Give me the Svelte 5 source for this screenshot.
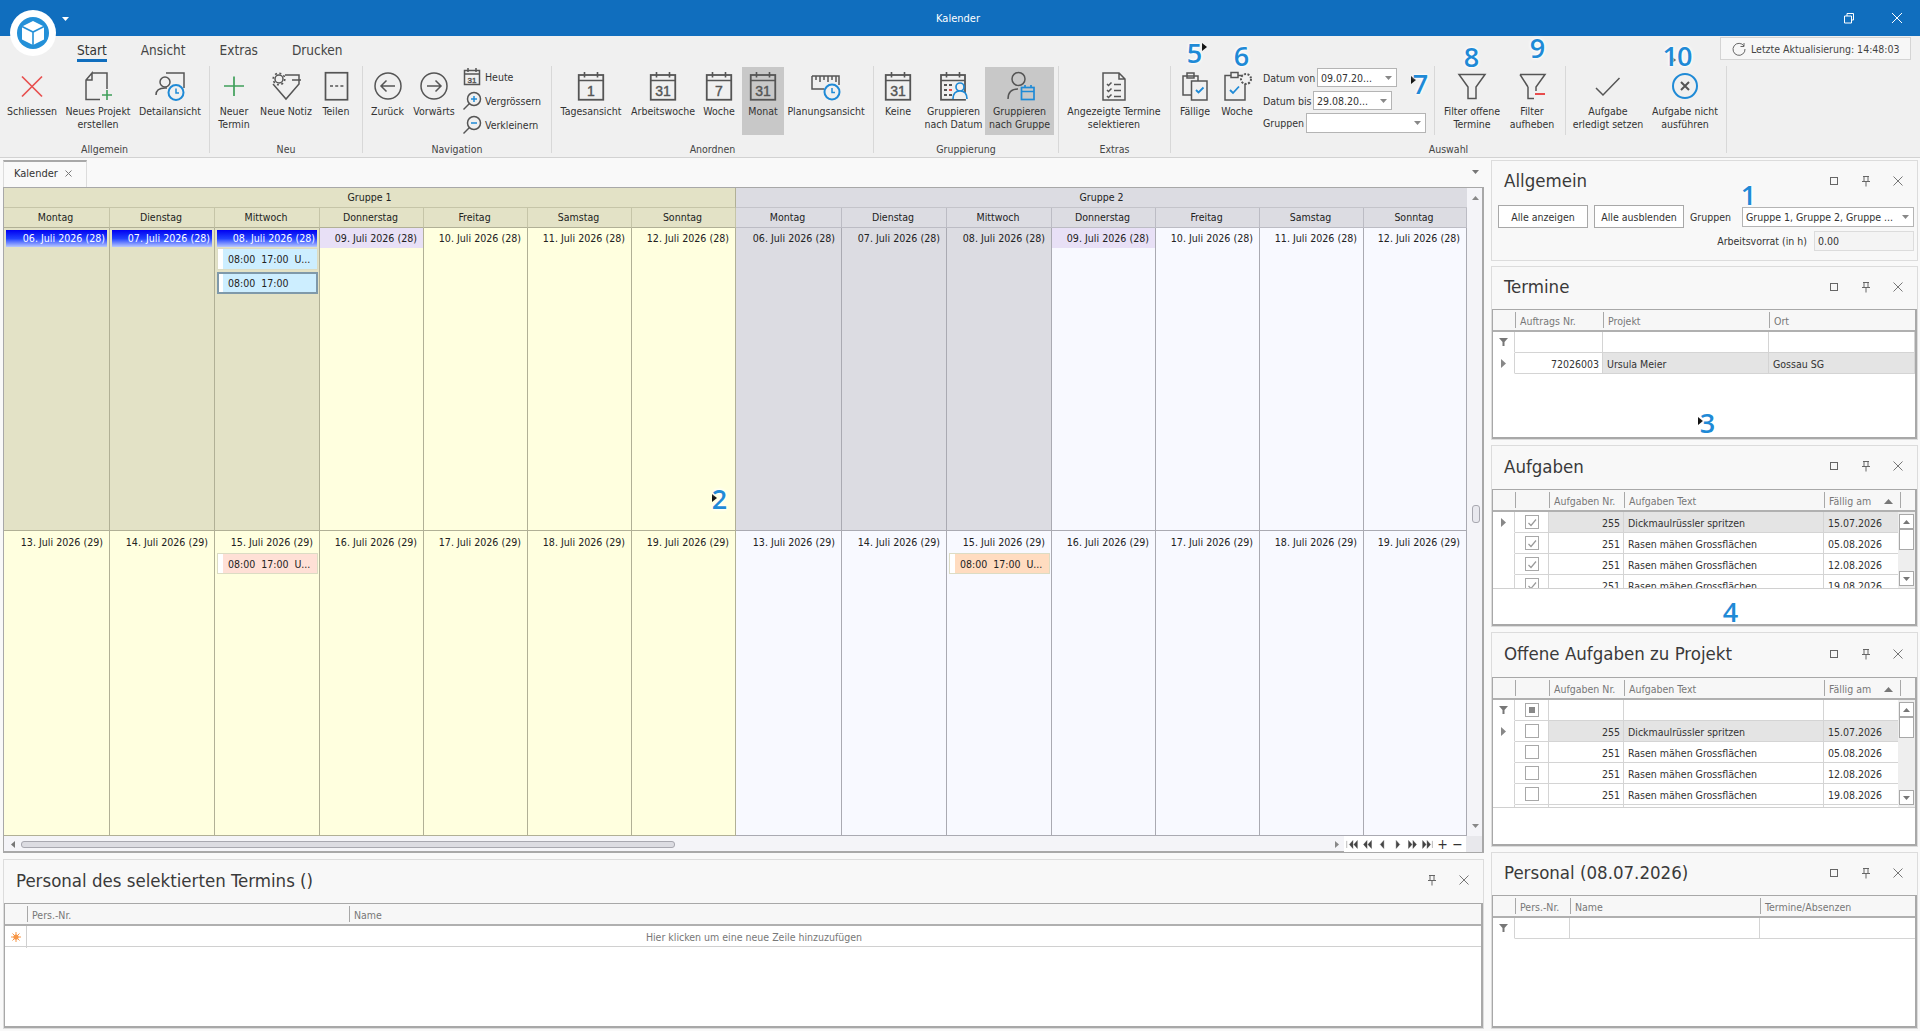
<script>
	const ico = (body, size = 32) =>
		`<svg width="${size}" height="${size}" viewBox="0 0 ${size} ${size}" fill="none" stroke="#555" stroke-width="1.5">${body}</svg>`;
	const BLUE = '#1f8ad6';
	const txt = (t, x, y, fs = 14) =>
		`<text x="${x}" y="${y}" text-anchor="middle" font-size="${fs}" fill="#555" stroke="#555" stroke-width=".4" font-family="Liberation Sans, sans-serif">${t}</text>`;
	const calBody = (t) =>
		`<rect x="3.75" y="4" width="24.5" height="24.75" stroke-width="1.8"/><path d="M3.75 9.5h24.5M9.5 1v5.5M22.5 1v5.5" stroke-width="1.6"/>${t ? txt(t, 16, 25) : ''}`;
	const clock = (x, y, r = 7.5) =>
		`<circle cx="${x}" cy="${y}" r="${r}" fill="#f0f0f0" stroke="${BLUE}" stroke-width="2"/><path d="M${x} ${y - 4}v4.5h3" stroke="${BLUE}" stroke-width="1.5"/>`;
	const icons = {
		close: ico('<path d="M6 5.5l20 20M26 5.5l-20 20" stroke="#e8504f" stroke-width="1.7"/>'),
		newproj: ico(`<path d="M10 2h15v16M18 28.5H4V9l6-7v7H4"/><path d="M25 19v10M20 24h10" stroke="#3f9f5a" stroke-width="1.6"/>`),
		detail: ico(`<path d="M12 2h18v15"/><circle cx="11" cy="11" r="5"/><path d="M2 24c0-5 3-7 9-7h2"/>${clock(22, 21.5)}`),
		plus: ico('<path d="M16 5.5v19.5M6 15h20" stroke="#3f9f5a" stroke-width="1.7"/>'),
		note: ico(`<path d="M15 4h14v9L16 28 3 13"/><path d="M22 9h9"/><circle cx="9" cy="8" r="4"/><circle cx="9" cy="8" r="5.8" stroke-dasharray="2 2.5" stroke-width="1.6"/>`),
		split: ico('<rect x="5.5" y="1.75" width="22" height="27" stroke-width="1.7"/><path d="M10 15h14" stroke-dasharray="3 2.2"/>'),
		back: ico('<circle cx="16" cy="15" r="13"/><path d="M9 15h14M14.5 9.5L9 15l5.5 5.5"/>'),
		forward: ico('<circle cx="16" cy="15" r="13"/><path d="M9 15h14M17.5 9.5L23 15l-5.5 5.5"/>'),
		cal1: ico(calBody('1')),
		cal31: ico(calBody('31')),
		cal7: ico(calBody('7')),
		plan: ico(`<path d="M2 5h27v9M2 5v13h12M6 5v4M10 5v6M14 5v4M18 5v6M22 5v4M26 5v6"/>${clock(22, 21)}`),
		groupdate: ico(`<rect x="3" y="4" width="24" height="24.75" stroke-width="1.8"/><path d="M3 9.5h24M8.5 1v5.5M21.5 1v5.5" stroke-width="1.6"/><path d="M6 14h3M11 14h3M6 19h3M6 24h3M11 24h3" stroke-width="2"/><path d="M11 19h3" stroke="#e8504f" stroke-width="2"/><circle cx="22" cy="16" r="4" fill="#f0f0f0" stroke="${BLUE}" stroke-width="1.7"/><path d="M15 28c0-6 3-8 7-8s7 2 7 8" fill="#f0f0f0" stroke="${BLUE}" stroke-width="1.7"/>`),
		groupgroup: ico(`<circle cx="14.5" cy="8" r="6.5"/><path d="M4 28c0-7 4-10 10-10"/><rect x="17.5" y="16.5" width="12.5" height="12" stroke="${BLUE}" stroke-width="1.7"/><path d="M17.5 20.5h12.5M21 14v3M27 14v3" stroke="${BLUE}" stroke-width="1.7"/>`),
		list: ico('<path d="M5 2h16l6 6v21H5zM21 2v6h6"/><path d="M9 13l1.5 1.5 3-3M9 19l1.5 1.5 3-3M9 25l1.5 1.5 3-3"/><path d="M16 13.5h7M16 19.5h7M16 25.5h7" stroke-width="1.7"/>'),
		due: ico(`<path d="M12 24H4V5h15v5"/><rect x="8" y="2" width="7" height="5"/><rect x="12.5" y="10" width="15.5" height="19" fill="#f0f0f0"/><path d="M17 19l2.5 2.5 5-5" stroke="${BLUE}" stroke-width="1.8"/>`),
		week: ico(`<rect x="4" y="4.5" width="20" height="24.5"/><rect x="10" y="1.5" width="7" height="5" fill="#f0f0f0"/><circle cx="25" cy="8" r="5" fill="#f0f0f0" stroke-dasharray="2 1.5" stroke-width="2"/><path d="M9 19l3 3 6-6.5" stroke="${BLUE}" stroke-width="1.8"/>`),
		filter: ico('<path d="M3 3.5h26L20 16v11.5h-8V16z"/>'),
		filteroff: ico('<path d="M4 3.5h25l-9 12.5v4M12 16L4 3.5M12 16v11.5h6"/><path d="M19 23h10" stroke="#e84c4c" stroke-width="2"/>'),
		check: ico('<path d="M4 17l7 7L27.5 7"/>'),
		cancel: ico(`<circle cx="16" cy="15" r="12" stroke="${BLUE}" stroke-width="2"/><path d="M12 11l8 8M20 11l-8 8" stroke-width="2"/>`),
		today: ico('<rect x="2.5" y="3.5" width="15" height="14"/><path d="M2.5 7h15M6 1v4M14 1v4"/>' + txt('31', 10, 15.5, 8), 20),
		zoomin: ico(`<circle cx="12" cy="8" r="6.5"/><path d="M7.5 12.5L1.5 18.5"/><path d="M12 5v6M9 8h6" stroke="${BLUE}"/>`, 20),
		zoomout: ico(`<circle cx="12" cy="8" r="6.5"/><path d="M7.5 12.5L1.5 18.5"/><path d="M9 8h6" stroke="${BLUE}"/>`, 20)
	};

	const groups = [
		{ name: 'Allgemein', w: 210, items: [
			{ icon: 'close', w: 64, label: 'Schliessen' },
			{ icon: 'newproj', w: 68, label: 'Neues Projekt\nerstellen' },
			{ icon: 'detail', w: 76, label: 'Detailansicht' }
		] },
		{ name: 'Neu', w: 153, items: [
			{ icon: 'plus', w: 48, label: 'Neuer\nTermin' },
			{ icon: 'note', w: 56, label: 'Neue Notiz' },
			{ icon: 'split', w: 44, label: 'Teilen' }
		] },
		{ name: 'Navigation', w: 189, items: [
			{ icon: 'back', w: 49, label: 'Zurück' },
			{ icon: 'forward', w: 44, label: 'Vorwärts' },
			{ kind: 'nav' }
		] },
		{ name: 'Anordnen', w: 322, items: [
			{ icon: 'cal1', w: 78, label: 'Tagesansicht' },
			{ icon: 'cal31', w: 66, label: 'Arbeitswoche' },
			{ icon: 'cal7', w: 46, label: 'Woche' },
			{ icon: 'cal31', w: 42, label: 'Monat', on: true },
			{ icon: 'plan', w: 84, label: 'Planungsansicht' }
		] },
		{ name: 'Gruppierung', w: 185, items: [
			{ icon: 'cal31', w: 48, label: 'Keine' },
			{ icon: 'groupdate', w: 63, label: 'Gruppieren\nnach Datum' },
			{ icon: 'groupgroup', w: 69, label: 'Gruppieren\nnach Gruppe', on: true }
		] },
		{ name: 'Extras', w: 112, items: [
			{ icon: 'list', w: 110, label: 'Angezeigte Termine\nselektieren' }
		] },
		{ name: 'Auswahl', w: 556, items: [
			{ icon: 'due', w: 48, label: 'Fällige' },
			{ icon: 'week', w: 36, label: 'Woche' },
			{ kind: 'form' },
			{ kind: 'sep' },
			{ icon: 'filter', w: 74, label: 'Filter offene\nTermine' },
			{ icon: 'filteroff', w: 46, label: 'Filter\naufheben' },
			{ kind: 'space' },
			{ kind: 'sep' },
			{ icon: 'check', w: 84, label: 'Aufgabe\nerledigt setzen' },
			{ icon: 'cancel', w: 70, label: 'Aufgabe nicht\nausführen' }
		] }
	];

	const formRows = [
		{ label: 'Datum von', lw: 54, w: 80, value: '09.07.20...' },
		{ label: 'Datum bis', lw: 50, w: 79, value: '29.08.20...' },
		{ label: 'Gruppen', lw: 43, w: 120, value: '', tall: true }
	];

	const colW = [106, 105, 105, 104, 104, 104, 104, 106, 105, 105, 104, 104, 104, 103];
	const dayNames = ['Montag', 'Dienstag', 'Mittwoch', 'Donnerstag', 'Freitag', 'Samstag', 'Sonntag'];
	const gridCols = colW.map((w) => w + 'px').join(' ');
	const allDays = [...dayNames, ...dayNames];

	const idx = [0, 1, 2, 3, 4, 5, 6, 7, 8, 9, 10, 11, 12, 13];
	const g1 = (i) => i < 7;
	const week1 = idx.map((i) => ({
		g2: !g1(i),
		sel: i % 7 < 3,
		today: i % 7 === 3,
		active: g1(i) && i < 3,
		date: `${String(6 + (i % 7)).padStart(2, '0')}. Juli 2026 (28)`,
		events: i === 2 ? [
			{ text: '08:00  17:00  U...', kind: 'blue' },
			{ text: '08:00  17:00', kind: 'blue picked' }
		] : []
	}));
	const week2 = idx.map((i) => ({
		g2: !g1(i),
		date: `${13 + (i % 7)}. Juli 2026 (29)`,
		events: i === 2 ? [{ text: '08:00  17:00  U...', kind: 'rose' }] : i === 9 ? [{ text: '08:00  17:00  U...', kind: 'peach' }] : []
	}));

	const navIcons = [
		'M1 5.5v8M8 5l-4 4.5 4 4.5zM13 5l-4 4.5 4 4.5z',
		'M7 5l-4 4.5 4 4.5zM12 5l-4 4.5 4 4.5z',
		'M9 5l-4 4.5 4 4.5z',
		'M6 5l4 4.5-4 4.5z',
		'M3 5l4 4.5-4 4.5zM8 5l4 4.5-4 4.5z',
		'M2 5l4 4.5-4 4.5zM7 5l4 4.5-4 4.5zM13 5.5v8'
	];

	const taskCols = [22, 34, 75, 200, 76, 0];
	const taskHead = ['', '', 'Aufgaben Nr.', 'Aufgaben Text', 'Fällig am', ''];
	const taskRows = [
		['255', 'Dickmaulrüssler spritzen', '15.07.2026'],
		['251', 'Rasen mähen Grossflächen', '05.08.2026'],
		['251', 'Rasen mähen Grossflächen', '12.08.2026'],
		['251', 'Rasen mähen Grossflächen', '19.08.2026']
	];
	const panels = [
		{ title: 'Termine', h: 174, head: 42, max: true, grid: {
			cols: [22, 88, 166, 146], labels: ['', 'Auftrags Nr.', 'Projekt', 'Ort'], filter: true, bodyH: 65,
			rows: [['72026003', 'Ursula Meier', 'Gossau SG']], align: ['r', 'l', 'l']
		} },
		{ title: 'Aufgaben', h: 182, head: 43, max: true, grid: {
			cols: taskCols, labels: taskHead, checks: 'on', sort: true, scroll: true, bodyH: 77,
			rows: taskRows, align: ['r', 'l', 'l']
		} },
		{ title: 'Offene Aufgaben zu Projekt', h: 215, head: 44, max: true, grid: {
			cols: taskCols, labels: taskHead, checks: 'off', filter: true, sort: true, scroll: true, bodyH: 108,
			rows: [...taskRows, ['', '', '']], align: ['r', 'l', 'l']
		} },
		{ title: 'Personal (08.07.2026)', h: 177, head: 42, max: true, grid: {
			cols: [22, 55, 190, 156], labels: ['', 'Pers.-Nr.', 'Name', 'Termine/Absenzen'], filter: true, bodyH: 110,
			rows: [], align: []
		} }
	];
	const template = (cols) => cols.map((w) => (w ? w + 'px' : '17px')).join(' ');

	const marks = [
		{ n: '1', x: 1748, y: 194 }, { n: '2', x: 719, y: 498 }, { n: '3', x: 1707, y: 422 },
		{ n: '4', x: 1730, y: 611 }, { n: '5', x: 1194, y: 52 }, { n: '6', x: 1241, y: 55 },
		{ n: '7', x: 1420, y: 83 }, { n: '8', x: 1471, y: 56 }, { n: '9', x: 1537, y: 47 },
		{ n: '10', x: 1677, y: 55 }
	];
	// little black leftovers next to some of the numbers
	const specks = [
		{ x: 1202, y: 43 }, { x: 1411, y: 76 }, { x: 1698, y: 417 }, { x: 1671, y: 56 }, { x: 712, y: 494 }
	];
</script>

{#snippet panelTools(max)}
	<div class="tools">
		{#if max}
			<svg width="10" height="10" viewBox="0 0 10 10"><rect x="1.5" y="1.5" width="7" height="7" fill="none" stroke="#666" /></svg>
		{/if}
		<svg width="10" height="12" viewBox="0 0 10 12"><path d="M2 1.5h6M3 1.5v4.5M7 1.5v4.5M1 6.5h8M5 6.5v5" fill="none" stroke="#666" /></svg>
		<svg width="10" height="10" viewBox="0 0 10 10"><path d="M.5.5l9 9M9.5.5l-9 9" fill="none" stroke="#777" /></svg>
	</div>
{/snippet}

{#snippet funnel()}
	<svg width="9" height="8" viewBox="0 0 9 8"><path d="M0 0h9L5.5 4v4h-2V4z" fill="#777" /></svg>
{/snippet}

{#snippet dataGrid(g)}
	<div class="grid">
		<div class="thead" style="grid-template-columns:{template(g.cols)}">
			{#each g.labels as label, i}
				<div class="th" class:plain={i === 0 || (g.checks && i === 1)}>
					{label}
					{#if g.sort && label === 'Fällig am'}
						<svg class="sort" width="9" height="5" viewBox="0 0 9 5"><path d="M4.5 0L9 5H0z" fill="#777" /></svg>
					{/if}
				</div>
			{/each}
		</div>
		<div class="tbody" class:clipped={g.scroll} style="height:{g.bodyH}px">
			<div class="trows">
				{#if g.filter}
					<div class="tr" style="grid-template-columns:{template(g.cols.filter((w) => w))}">
						<div class="td ind">{@render funnel()}</div>
						{#if g.checks}
							<div class="td mid"><span class="box"><i></i></span></div>
						{/if}
						{#each g.cols.slice(g.checks ? 2 : 1).filter((w) => w) as _}
							<div class="td"></div>
						{/each}
					</div>
				{/if}
				{#each g.rows as row, r}
					<div class="tr" style="grid-template-columns:{template(g.cols.filter((w) => w))}">
						<div class="td ind">
							{#if r === 0}<svg width="5" height="9" viewBox="0 0 5 9"><path d="M0 0l5 4.5L0 9z" fill="#888" /></svg>{/if}
						</div>
						{#if g.checks}
							<div class="td mid">
								<span class="box">
									{#if g.checks === 'on'}
										<svg width="10" height="9" viewBox="0 0 10 9"><path d="M1.5 5l2.5 2.5 5-6" fill="none" stroke="#999" stroke-width="1.2" /></svg>
									{/if}
								</span>
							</div>
						{/if}
						{#each row as value, c}
							<div class="td" class:cur={r === 0 && (g.checks || c > 0)} class:num={g.align[c] === 'r'}>{value}</div>
						{/each}
					</div>
				{/each}
			</div>
			{#if g.scroll}
				<div class="vbar">
					<span class="vbtn"><svg width="7" height="4" viewBox="0 0 7 4"><path d="M3.5 0L7 4H0z" fill="#777" /></svg></span>
					<span class="vthumb"></span>
					<span class="vfill"></span>
					<span class="vbtn"><svg width="7" height="4" viewBox="0 0 7 4"><path d="M3.5 4L7 0H0z" fill="#777" /></svg></span>
				</div>
			{/if}
		</div>
	</div>
{/snippet}

<div class="app">
	<header class="titlebar">
		<span></span>
		<span class="title">Kalender</span>
		<div class="winbtns">
			<svg width="12" height="12" viewBox="0 0 12 12"><path d="M1.5 4h7v7h-7zM4 4V1.5h6.5V8H8.5" fill="none" stroke="#fff" /></svg>
			<svg width="12" height="12" viewBox="0 0 12 12"><path d="M1 1l10 10M11 1L1 11" fill="none" stroke="#fff" /></svg>
		</div>
	</header>

	<div class="logo">
		<svg width="46" height="46" viewBox="0 0 46 46">
			<circle cx="23" cy="23" r="23" fill="#fff" />
			<circle cx="23" cy="23" r="16" fill="#2490d8" />
			<path d="M23 11l11 5.5v13L23 35l-11-5.5v-13z" fill="#fff" />
			<path d="M12 16.5L23 22l11-5.5M23 22v13" fill="none" stroke="#2490d8" stroke-width="1.6" />
		</svg>
		<svg class="qat" width="7" height="4" viewBox="0 0 7 4"><path d="M0 0h7L3.5 4z" fill="#fff" /></svg>
	</div>

	<div class="ribbon">
		<nav class="tabs">
			<span class="tab active">Start</span>
			<span class="tab">Ansicht</span>
			<span class="tab">Extras</span>
			<span class="tab">Drucken</span>
			<div class="update">
				<svg width="14" height="14" viewBox="0 0 14 14"><path d="M12 4A6 6 0 1 0 13 7M12 1v3.5H8.5" fill="none" stroke="#666" /></svg>
				Letzte Aktualisierung: 14:48:03
			</div>
		</nav>
		<div class="groups">
			{#each groups as group}
				<section class="group" style="width:{group.w}px">
					<div class="items">
						{#each group.items as item}
							{#if item.kind === 'nav'}
								<div class="smallcol">
									<div class="small">{@html icons.today}<span>Heute</span></div>
									<div class="small">{@html icons.zoomin}<span>Vergrössern</span></div>
									<div class="small">{@html icons.zoomout}<span>Verkleinern</span></div>
								</div>
							{:else if item.kind === 'form'}
								<div class="rform">
									{#each formRows as row}
										<div class="frow" class:tall={row.tall}>
											<span class="flabel" style="width:{row.lw}px">{row.label}</span>
											<div class="combo" style="width:{row.w}px">
												<span>{row.value}</span>
												<svg width="7" height="4" viewBox="0 0 7 4"><path d="M0 0h7L3.5 4z" fill="#888" /></svg>
											</div>
										</div>
									{/each}
								</div>
							{:else if item.kind === 'sep'}
								<div class="isep"></div>
							{:else if item.kind === 'space'}
								<div class="ispace"></div>
							{:else}
								<button class="rbtn" class:on={item.on} style="width:{item.w}px">
									<span class="ricon">{@html icons[item.icon]}</span>
									<span class="rlabel">{item.label}</span>
								</button>
							{/if}
						{/each}
					</div>
					<div class="glabel">{group.name}</div>
				</section>
			{/each}
		</div>
	</div>

	<main class="main">
		<div class="left">
			<div class="tabstrip">
				<div class="doctab">
					Kalender
					<svg width="7" height="7" viewBox="0 0 7 7"><path d="M.5.5l6 6M6.5.5l-6 6" fill="none" stroke="#777" /></svg>
				</div>
				<svg class="stripmenu" width="7" height="4" viewBox="0 0 7 4"><path d="M0 0h7L3.5 4z" fill="#777" /></svg>
			</div>

			<div class="calendar">
				<div class="calrow">
					<div class="calgrid" style="grid-template-columns:{gridCols}">
						<div class="grouphead">Gruppe 1</div>
						<div class="grouphead g2">Gruppe 2</div>
						{#each allDays as day, i}
							<div class="dayhead" class:g2={i > 6}>{day}</div>
						{/each}
						{#each week1 as cell}
							<div class="cell row1" class:g2={cell.g2} class:sel={cell.sel}>
								<div class="date" class:today={cell.today} class:active={cell.active}>{cell.date}</div>
								{#each cell.events as ev}
									<div class="event {ev.kind}"><span>{ev.text}</span></div>
								{/each}
							</div>
						{/each}
						{#each week2 as cell}
							<div class="cell row2" class:g2={cell.g2}>
								<div class="date">{cell.date}</div>
								{#each cell.events as ev}
									<div class="event {ev.kind}"><span>{ev.text}</span></div>
								{/each}
							</div>
						{/each}
					</div>
					<div class="calscroll">
						<svg width="7" height="4" viewBox="0 0 7 4"><path d="M3.5 0L7 4H0z" fill="#888" /></svg>
						<span class="calthumb"></span>
						<svg width="7" height="4" viewBox="0 0 7 4"><path d="M3.5 4L7 0H0z" fill="#888" /></svg>
					</div>
				</div>
				<div class="hbar">
					<svg width="4" height="7" viewBox="0 0 4 7"><path d="M4 0L0 3.5 4 7z" fill="#777" /></svg>
					<span class="hthumb"></span>
					<svg width="4" height="7" viewBox="0 0 4 7"><path d="M0 0l4 3.5L0 7z" fill="#888" /></svg>
					<div class="calnav">
						{#each navIcons as d}
							<svg width="15" height="16" viewBox="0 0 15 18"><path {d} fill="#444" stroke="#444" stroke-width=".4" /></svg>
						{/each}
						<span class="pm">+</span>
						<span class="pm">−</span>
					</div>
					<span class="corner"></span>
				</div>
			</div>

			<section class="panel lower">
				<div class="phead">
					<h2>Personal des selektierten Termins ()</h2>
					{@render panelTools(false)}
				</div>
				<div class="grid">
					<div class="thead" style="grid-template-columns:22px 322px 1fr">
						<div class="th plain"></div>
						<div class="th">Pers.-Nr.</div>
						<div class="th">Name</div>
					</div>
					<div class="newrow">
						<span class="star">
							<svg width="10" height="10" viewBox="0 0 10 10"><path d="M5 0v10M0 5h10M1.5 1.5l7 7M8.5 1.5l-7 7" stroke="#f79646" /><circle cx="5" cy="5" r="2.6" fill="#f79646" /></svg>
						</span>
						<span class="newtext">Hier klicken um eine neue Zeile hinzuzufügen</span>
					</div>
				</div>
			</section>
		</div>

		<aside class="right">
			<section class="panel general">
				<div class="phead short">
					<h2>Allgemein</h2>
					{@render panelTools(true)}
				</div>
				<div class="genrow">
					<button class="plainbtn">Alle anzeigen</button>
					<button class="plainbtn">Alle ausblenden</button>
					<span class="genlabel">Gruppen</span>
					<div class="combo wide">
						<span>Gruppe 1, Gruppe 2, Gruppe ...</span>
						<svg width="7" height="4" viewBox="0 0 7 4"><path d="M0 0h7L3.5 4z" fill="#888" /></svg>
					</div>
				</div>
				<div class="genrow second">
					<span>Arbeitsvorrat (in h)</span>
					<div class="readonly">0.00</div>
				</div>
			</section>
			{#each panels as p}
				<section class="panel" style="height:{p.h}px">
					<div class="phead" style="height:{p.head}px">
						<h2>{p.title}</h2>
						{@render panelTools(p.max)}
					</div>
					{@render dataGrid(p.grid)}
				</section>
			{/each}
		</aside>
	</main>

	{#each specks as s}
		<svg class="speck" style="left:{s.x}px;top:{s.y}px" width="5" height="8" viewBox="0 0 5 8"><path d="M0 0l5 4-5 4z" fill="#111" /></svg>
	{/each}
	{#each marks as m}
		<span class="mark" style="left:{m.x}px;top:{m.y}px">{m.n}</span>
	{/each}
</div>

<style>
	:global(body) {
		margin: 0;
		background: #f9f9f9;
	}

	.app {
		position: relative;
		width: 1920px;
		height: 1031px;
		overflow: hidden;
		display: flex;
		flex-direction: column;
		background: #f9f9f9;
		color: #333;
		font-family: 'DejaVu Sans', 'Liberation Sans', sans-serif;
		font-stretch: condensed;
		font-size: 10.5px;
	}

	.titlebar {
		height: 36px;
		flex: none;
		background: #106ebe;
		color: #fff;
		display: grid;
		grid-template-columns: 1fr auto 1fr;
		align-items: center;
	}

	.title {
		font-size: 11px;
		margin-left: -4px;
	}

	.winbtns {
		display: flex;
		justify-content: flex-end;
		gap: 36px;
		padding-right: 17px;
	}

	.logo {
		position: absolute;
		left: 10px;
		top: 10px;
		width: 46px;
		height: 46px;
	}

	.qat {
		position: absolute;
		left: 52px;
		top: 7px;
	}

	.ribbon {
		height: 121px;
		flex: none;
		background: #f0f0f0;
		border-bottom: 1px solid #d2d2d2;
		box-sizing: content-box;
	}

	.tabs {
		height: 30px;
		display: flex;
		align-items: flex-start;
		font-size: 13.5px;
		color: #444;
		padding-left: 77px;
	}

	.tab {
		line-height: 28px;
		height: 23px;
		margin-right: 34px;
	}

	.tab.active {
		border-bottom: 3px solid #106ebe;
		color: #333;
	}

	.update {
		margin: 1px 9px 0 auto;
		width: 191px;
		height: 23px;
		box-sizing: border-box;
		background: #f7f7f7;
		border: 1px solid #d4d4d4;
		display: flex;
		align-items: center;
		gap: 5px;
		padding-left: 11px;
		font-size: 10.5px;
		white-space: nowrap;
	}

	.groups {
		display: flex;
		height: 87px;
	}

	.group {
		box-sizing: border-box;
		height: 87px;
		flex: none;
		display: flex;
		flex-direction: column;
		border-right: 1px solid #d8d8d8;
	}

	.items {
		display: flex;
		height: 68px;
		flex: none;
		margin-top: 1px;
	}

	.rbtn {
		flex: none;
		height: 68px;
		padding: 0;
		border: 0;
		background: none;
		font: inherit;
		color: inherit;
		display: flex;
		flex-direction: column;
		align-items: center;
	}

	.rbtn.on {
		background: #c8c8c8;
	}

	.ricon {
		height: 32px;
		margin-top: 4px;
		display: block;
	}

	.rlabel {
		white-space: pre;
		line-height: 13px;
		margin-top: 2px;
		text-align: center;
	}

	.glabel {
		flex: none;
		margin-top: 7px;
		line-height: 14px;
		text-align: center;
		color: #444;
	}

	.smallcol {
		display: flex;
		flex-direction: column;
		gap: 4px;
		padding: 0 0 0 6px;
	}

	.small {
		display: flex;
		align-items: center;
		gap: 3px;
		height: 20px;
	}

	.rform {
		width: 171px;
		padding: 1px 0 0 8px;
		display: flex;
		flex-direction: column;
		gap: 4px;
	}

	.frow {
		display: flex;
		align-items: center;
		height: 19px;
	}

	.frow.tall {
		height: 20px;
		margin-top: -1px;
	}

	.flabel {
		flex: none;
		white-space: nowrap;
	}

	.combo {
		box-sizing: border-box;
		height: 100%;
		background: #fff;
		border: 1px solid #b4b4b4;
		display: flex;
		align-items: center;
		justify-content: space-between;
		padding: 0 4px 0 3px;
		white-space: nowrap;
		overflow: hidden;
	}

	.isep {
		width: 1px;
		background: #d8d8d8;
		height: 69px;
		margin-top: -1px;
		flex: none;
	}

	.ispace {
		width: 10px;
		flex: none;
	}

	.main {
		flex: 1;
		display: flex;
		min-height: 0;
	}

	.left {
		width: 1487px;
		padding-left: 3px;
		box-sizing: border-box;
		flex: none;
		display: flex;
		flex-direction: column;
	}

	.tabstrip {
		height: 29px;
		flex: none;
		display: flex;
		align-items: flex-end;
		justify-content: space-between;
		padding-right: 8px;
	}

	.doctab {
		width: 84px;
		height: 27px;
		box-sizing: border-box;
		background: #f9f9f9;
		border: 1px solid #dcdcdc;
		border-top: 2px solid #a8a8a8;
		border-bottom: 0;
		display: flex;
		align-items: center;
		justify-content: space-between;
		padding: 0 14px 2px 10px;
		font-size: 11px;
	}

	.stripmenu {
		margin-bottom: 13px;
	}

	.calendar {
		width: 1481px;
		height: 666px;
		flex: none;
		box-sizing: border-box;
		border: 1px solid #a8a8a8;
		border-width: 1px 2px 2px 1px;
		background: #f4f4f8;
		display: flex;
		flex-direction: column;
	}

	.calrow {
		display: flex;
		height: 648px;
		flex: none;
	}

	.calgrid {
		display: grid;
		grid-template-rows: 20px 20px 303px 305px;
		width: 1463px;
		flex: none;
		color: #222;
	}

	.grouphead {
		grid-column: span 7;
		background: #e3e2c6;
		border-bottom: 1px solid #c6c5a8;
		border-right: 1px solid #b1b096;
		text-align: center;
		line-height: 19px;
	}

	.grouphead.g2 {
		background: #dcdce2;
		border-bottom-color: #c4c4ca;
		border-right: 0;
	}

	.dayhead {
		background: #e3e2c6;
		border-right: 1px solid #c6c5a8;
		border-bottom: 1px solid #b1b096;
		text-align: center;
		line-height: 19px;
		padding-right: 2px;
	}

	.dayhead.g2 {
		background: #dcdce2;
		border-color: #bcbcc4;
	}

	.cell {
		background: #ffffdf;
		border-right: 1px solid #b1b096;
		border-bottom: 1px solid #b1b096;
		min-width: 0;
	}

	.cell.g2 {
		background: #f8f9ff;
		border-color: #aaaab2;
	}

	.cell.sel {
		background: #e3e2c6;
	}

	.cell.sel.g2 {
		background: #dcdce2;
	}

	.date {
		height: 20px;
		line-height: 20px;
		text-align: right;
		padding-right: 6px;
		box-sizing: border-box;
		white-space: nowrap;
		font-size: 10.6px;
	}

	.date.today {
		background: #e8e0f6;
	}

	.date.active {
		margin: 2px 2px 1px;
		height: 17px;
		line-height: 17px;
		padding-right: 2px;
		color: #fff;
		background: linear-gradient(#0000f0, #2040ff 50%, #b8c8ff);
	}

	.row2 .date {
		height: 21px;
		line-height: 22px;
	}

	.event {
		box-sizing: border-box;
		height: 22px;
		margin: 1px 1px 2px 2px;
		border: 1px solid #dcdcc4;
		display: flex;
		background: #fff;
		padding-left: 5px;
		white-space: pre;
	}

	.row2 .event {
		height: 21px;
	}

	.event span {
		flex: 1;
		line-height: 20px;
		padding-left: 5px;
		overflow: hidden;
	}

	.event.blue span {
		background: #cdeeff;
	}

	.event.rose span {
		background: #ffe0d6;
	}

	.event.peach span {
		background: #ffdcc0;
	}

	.event.picked {
		border: 2px solid #7f99aa;
		padding-left: 4px;
	}

	.event.picked span {
		line-height: 18px;
	}

	.calscroll {
		flex: 1;
		display: flex;
		flex-direction: column;
		align-items: center;
		padding: 8px 0 0 2px;
		position: relative;
	}

	.calscroll svg:last-child {
		margin-top: auto;
		margin-bottom: 8px;
	}

	.calthumb {
		width: 6px;
		height: 16px;
		border: 1px solid #a8a8b0;
		border-radius: 3px;
		background: #e8e8ee;
		margin-top: 305px;
	}

	.hbar {
		flex: 1;
		display: flex;
		align-items: center;
		padding-left: 7px;
	}

	.hthumb {
		width: 652px;
		height: 5px;
		margin-left: 6px;
		border: 1px solid #a8a8b0;
		border-radius: 3px;
		background: #dcdce2;
	}

	.hbar > svg:nth-of-type(2) {
		margin-left: auto;
		margin-right: 5px;
	}

	.calnav {
		height: 100%;
		width: 122px;
		flex: none;
		background: #fff;
		display: flex;
		align-items: center;
		padding-left: 1px;
		box-sizing: border-box;
	}

	.calnav svg {
		flex: none;
	}

	.pm {
		width: 15px;
		text-align: center;
		font-size: 14px;
		font-weight: 400;
		color: #333;
	}

	.corner {
		width: 16px;
		height: 100%;
		background: #e8e8ec;
		flex: none;
	}

	.panel {
		box-sizing: border-box;
		border: 1px solid #dcdcdc;
		background: #f8f8f8;
		display: flex;
		flex-direction: column;
		flex: none;
	}

	.panel.lower {
		width: 1481px;
		height: 170px;
		margin-top: 6px;
	}

	.phead {
		height: 43px;
		flex: none;
		box-sizing: border-box;
		display: flex;
		align-items: center;
		justify-content: space-between;
		padding: 0 14px 3px 12px;
	}

	.phead.short {
		height: 42px;
	}

	h2 {
		margin: 0;
		font-size: 18.5px;
		font-weight: 400;
		color: #3a3a3a;
		white-space: nowrap;
	}

	.tools {
		display: flex;
		align-items: center;
		gap: 22px;
	}

	.right {
		width: 428px;
		padding: 2px 0 0 1px;
		margin-left: 3px;
		box-sizing: border-box;
		display: flex;
		flex-direction: column;
		gap: 5px;
	}

	.general {
		height: 101px;
	}

	.genrow {
		display: flex;
		align-items: center;
		padding-left: 6px;
		height: 23px;
		margin-top: 2px;
	}

	.genrow.second {
		justify-content: flex-end;
		height: 20px;
		margin-top: 3px;
		padding-right: 3px;
		gap: 7px;
	}

	.plainbtn {
		width: 90px;
		height: 23px;
		padding: 0;
		margin-right: 6px;
		background: #fff;
		border: 1px solid #a8a8a8;
		font: inherit;
		color: inherit;
	}

	.genlabel {
		width: 52px;
		flex: none;
	}

	.combo.wide {
		width: 172px;
		height: 20px;
		flex: none;
	}

	.readonly {
		box-sizing: border-box;
		width: 100px;
		height: 20px;
		border: 1px solid #dcdcdc;
		background: #f4f4f4;
		padding-left: 3px;
		line-height: 18px;
	}

	.grid {
		flex: 1;
		min-height: 0;
		background: #fff;
		border: 1px solid #a8a8a8;
		border-width: 1px 2px 2px 1px;
		overflow: hidden;
	}

	.thead {
		display: grid;
		height: 22px;
		background: #f7f7f7;
		border-bottom: 2px solid #b0b0b0;
		box-sizing: border-box;
		color: #777;
	}

	.th {
		display: flex;
		align-items: center;
		justify-content: space-between;
		padding: 2px 7px 0 4px;
		white-space: nowrap;
		position: relative;
		border-left: 1px solid #a8a8a8;
		margin: 2px 0;
	}

	.th.plain {
		padding: 0;
	}

	.th:first-child {
		border-left: 0;
	}

	.tbody {
		display: flex;
		overflow: hidden;
		box-sizing: border-box;
	}

	.tbody.clipped {
		border-bottom: 1px solid #d0d0d0;
	}

	.trows {
		flex: 1;
		min-width: 0;
	}

	.tr {
		display: grid;
		height: 21px;
		box-sizing: border-box;
	}

	.td {
		box-sizing: border-box;
		border-right: 1px solid #d4d4d4;
		border-bottom: 1px solid #d4d4d4;
		padding: 0 3px 0 4px;
		line-height: 22px;
		white-space: nowrap;
		overflow: hidden;
		background: #fff;
	}

	.td.ind,
	.td.mid {
		display: flex;
		align-items: center;
		justify-content: center;
		padding: 0;
	}

	.td.ind {
		border-bottom-color: #fff;
	}

	.td.cur {
		background: #e4e4e4;
	}

	.td.num {
		text-align: right;
	}

	.box {
		width: 14px;
		height: 14px;
		box-sizing: border-box;
		border: 1px solid #a8a8a8;
		background: #fff;
		display: flex;
		align-items: center;
		justify-content: center;
	}

	.box i {
		width: 6px;
		height: 6px;
		background: #888;
	}

	.vbar {
		width: 17px;
		flex: none;
		background: #eeeeee;
		display: flex;
		flex-direction: column;
		padding: 2px 1px;
		box-sizing: border-box;
	}

	.vbtn,
	.vthumb {
		display: flex;
		align-items: center;
		justify-content: center;
		box-sizing: border-box;
		border: 1px solid #a8a8a8;
		background: #fff;
		height: 15px;
		flex: none;
	}

	.vthumb {
		height: 21px;
	}

	.vfill {
		flex: 1;
	}

	.newrow {
		display: grid;
		grid-template-columns: 22px 1fr;
		height: 21px;
		border-bottom: 1px solid #d0d0d0;
		box-sizing: border-box;
		color: #777;
	}

	.star {
		display: flex;
		align-items: center;
		justify-content: center;
		border-right: 1px solid #d0d0d0;
	}

	.newtext {
		text-align: center;
		line-height: 22px;
	}

	.speck {
		position: absolute;
	}

	.mark {
		position: absolute;
		transform: translate(-50%, -50%);
		font-family: 'Open Sans', sans-serif;
		font-stretch: normal;
		font-size: 27px;
		font-weight: 600;
		line-height: 1;
		letter-spacing: -1px;
		color: #1f8ad6;
		text-shadow: 0 0 2px #fff, 0 0 3px #fff, 0 0 4px #fff;
	}
</style>
